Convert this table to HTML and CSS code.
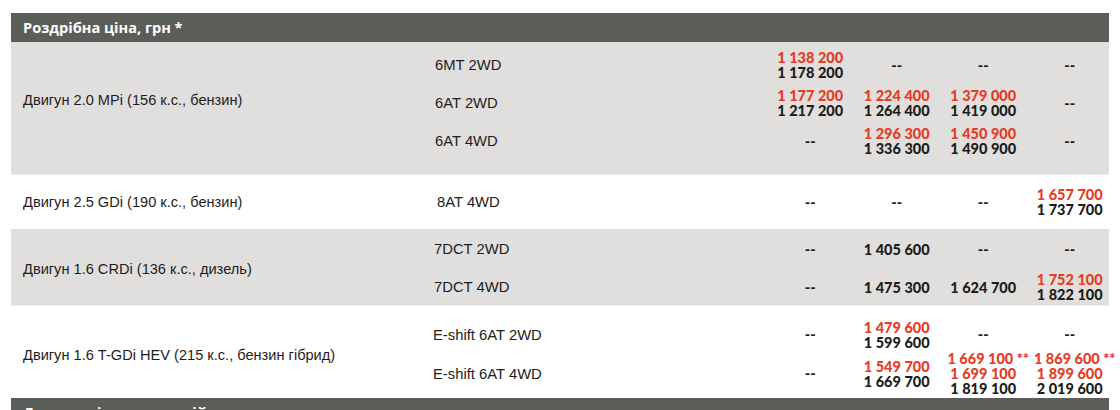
FILE: index.html
```html
<!DOCTYPE html>
<html lang="uk">
<head>
<meta charset="utf-8">
<title>Роздрібна ціна</title>
<link rel="stylesheet" href="styles.css">
</head>
<body>
<div class="page">
  <div class="bar">Роздрібна ціна, грн *</div>

  <div class="block gray b1">
    <div class="engine">Двигун 2.0 MPi (156 к.с., бензин)</div>
    <div class="rows">
      <div class="row r38">
        <div class="trans">6MT 2WD</div>
        <div class="cell"><span class="red">1 138 200</span><span>1 178 200</span></div>
        <div class="cell"><span>--</span></div>
        <div class="cell"><span>--</span></div>
        <div class="cell"><span>--</span></div>
      </div>
      <div class="row r38">
        <div class="trans">6AT 2WD</div>
        <div class="cell"><span class="red">1 177 200</span><span>1 217 200</span></div>
        <div class="cell"><span class="red">1 224 400</span><span>1 264 400</span></div>
        <div class="cell"><span class="red">1 379 000</span><span>1 419 000</span></div>
        <div class="cell"><span>--</span></div>
      </div>
      <div class="row r38">
        <div class="trans">6AT 4WD</div>
        <div class="cell"><span>--</span></div>
        <div class="cell"><span class="red">1 296 300</span><span>1 336 300</span></div>
        <div class="cell"><span class="red">1 450 900</span><span>1 490 900</span></div>
        <div class="cell"><span>--</span></div>
      </div>
    </div>
  </div>

  <div class="block white b2">
    <div class="engine">Двигун 2.5 GDi (190 к.с., бензин)</div>
    <div class="rows">
      <div class="row r54">
        <div class="trans t2">8AT 4WD</div>
        <div class="cell"><span>--</span></div>
        <div class="cell"><span>--</span></div>
        <div class="cell"><span>--</span></div>
        <div class="cell"><span class="red">1 657 700</span><span>1 737 700</span></div>
      </div>
    </div>
  </div>

  <div class="block gray b3">
    <div class="engine">Двигун 1.6 CRDi (136 к.с., дизель)</div>
    <div class="rows">
      <div class="row r40">
        <div class="trans t3">7DCT 2WD</div>
        <div class="cell"><span>--</span></div>
        <div class="cell"><span>1 405 600</span></div>
        <div class="cell"><span>--</span></div>
        <div class="cell"><span>--</span></div>
      </div>
      <div class="row r36">
        <div class="trans t3">7DCT 4WD</div>
        <div class="cell"><span>--</span></div>
        <div class="cell"><span>1 475 300</span></div>
        <div class="cell"><span>1 624 700</span></div>
        <div class="cell"><span class="red">1 752 100</span><span>1 822 100</span></div>
      </div>
    </div>
  </div>

  <div class="block white b4">
    <div class="engine">Двигун 1.6 T-GDi HEV (215 к.с., бензин гібрид)</div>
    <div class="rows">
      <div class="row r33">
        <div class="trans t4">E-shift 6AT 2WD</div>
        <div class="cell"><span>--</span></div>
        <div class="cell"><span class="red">1 479 600</span><span>1 599 600</span></div>
        <div class="cell"><span>--</span></div>
        <div class="cell"><span>--</span></div>
      </div>
      <div class="row r45">
        <div class="trans t4">E-shift 6AT 4WD</div>
        <div class="cell"><span>--</span></div>
        <div class="cell"><span class="red">1 549 700</span><span>1 669 700</span></div>
        <div class="cell"><span class="red">1 669 100<b class="note"> **</b></span><span class="red">1 699 100</span><span>1 819 100</span></div>
        <div class="cell"><span class="red">1 869 600<b class="note"> **</b></span><span class="red">1 899 600</span><span>2 019 600</span></div>
      </div>
    </div>
  </div>

  <div class="bar">Додаткові пакети опцій</div>
</div>
</body>
</html>
```
FILE: styles.css
```css
*, *::before, *::after {
  box-sizing: border-box;
}

html, body {
  margin: 0;
  padding: 0;
  background: #ffffff;
}

.page {
  width: 1109px;
  padding: 13px 0 0 11px;
}

.bar {
  height: 29px;
  background: #5b5d59;
  color: #ffffff;
  font-family: "Open Sans", "Liberation Sans", sans-serif;
  font-weight: 700;
  font-size: 14.6px;
  line-height: 29px;
  padding-left: 12px;
}

.block {
  display: flex;
  align-items: center;
  font-family: "Liberation Sans", Arial, sans-serif;
  color: #1d1d1b;
}

.gray {
  background: #e0dfdd;
  border-bottom: 1px solid #ebeae9;
}

.white {
  background: #ffffff;
}

.b1 { height: 133px; padding-top: 4px; align-items: flex-start; }
.b1 .engine { margin-top: 45px; }
.b2 { height: 54px; }
.b3 { height: 77px; align-items: flex-start; }
.b3 .engine { margin-top: 31px; }
.b4 { height: 92px; padding-top: 12px; align-items: flex-start; }
.b4 .engine { margin-top: 28px; }

.engine {
  width: 424px;
  padding-left: 12px;
  font-size: 14.6px;
  line-height: 18px;
}

.rows {
  display: flex;
  flex-direction: column;
  width: 674px;
}

.row {
  display: grid;
  grid-template-columns: 332px repeat(4, 86.5px);
  align-items: center;
}

.r33 { height: 33px; }
.r36 { height: 36px; }
.r38 { height: 38px; }
.r40 { height: 40px; }
.r45 { height: 45px; }
.r54 { height: 54px; }

.trans {
  font-size: 14.8px;
  line-height: 18px;
}
.t2 { padding-left: 2px; }
.t3 { margin-left: -1px; }
.t4 { margin-left: -2px; }

.cell {
  display: flex;
  flex-direction: column;
  align-items: center;
  font-family: "Lato", "Liberation Sans", sans-serif;
  font-weight: 900;
  font-size: 14.5px;
  line-height: 15px;
  white-space: nowrap;
}

.red {
  color: #e63b24;
}

.note {
  font-weight: 900;
  margin-right: -10px;
}
```
